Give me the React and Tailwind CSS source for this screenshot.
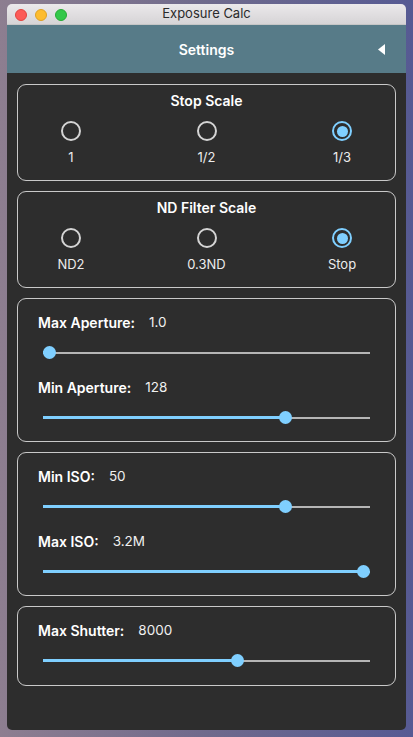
const font = { fontFamily: "Inter, 'Liberation Sans', sans-serif" }

function Radio({ label, checked }) {
	return (
		<div className="flex w-[40px] flex-col items-center">
			<div
				className={
					checked
						? "flex h-[20px] w-[20px] items-center justify-center rounded-full border-2 border-[#7fcfff]"
						: "h-[20px] w-[20px] rounded-full border-2 border-[#d4d4d4]"
				}
			>
				{checked && <div className="h-[11px] w-[11px] rounded-full bg-[#7fcfff]"></div>}
			</div>
			<div className="mt-[8px] whitespace-nowrap text-[13px] leading-[16px] text-[#ececec]">{label}</div>
		</div>
	)
}

function RadioCard({ title, options, selected }) {
	return (
		<div className="h-[97px] rounded-[9px] border-[1.5px] border-[#c9c9c9] pt-[7px]">
			<div className="text-center text-[14px] font-semibold leading-[17px] text-white">{title}</div>
			<div className="mt-[12px] flex justify-between px-[33px]">
				{options.map((o, i) => (
					<Radio key={o} label={o} checked={i === selected} />
				))}
			</div>
		</div>
	)
}

function Slider({ value }) {
	return (
		<div className="relative mx-[25px] h-[14px]">
			<div className="absolute left-0 right-0 top-[6px] h-[2px] bg-[#b5b5b5]"></div>
			<div
				className="absolute left-0 top-[5px] h-[3px] bg-[#7fcfff]"
				style={{ width: `calc(6px + (100% - 12px) * ${value / 100})` }}
			></div>
			<div
				className="absolute top-0 h-[13px] w-[13px] rounded-full bg-[#7fcfff]"
				style={{ left: `calc((100% - 13px) * ${value / 100})` }}
			></div>
		</div>
	)
}

function SliderRow({ label, value, pos }) {
	return (
		<div>
			<div className="flex h-[17px] items-center pl-[20px] text-[14px]">
				<span className="font-semibold text-white">{label}</span>
				<span className="ml-[14px] text-[13.5px] text-[#f0f0f0]">{value}</span>
			</div>
			<div className="mt-[15px]">
				<Slider value={pos} />
			</div>
		</div>
	)
}

function SliderCard({ rows, last }) {
	return (
		<div
			className={
				last
					? "flex flex-col gap-[19px] rounded-[9px] border-[1.5px] border-[#c9c9c9] pb-[17px] pt-[15px]"
					: "flex flex-col gap-[19px] rounded-[9px] border-[1.5px] border-[#c9c9c9] pb-[16px] pt-[15px]"
			}
		>
			{rows.map((r) => (
				<SliderRow key={r.label} {...r} />
			))}
		</div>
	)
}

export default function App() {
	return (
		<div
			className="h-[737px] w-[413px] bg-gradient-to-r from-[#8d7e90] via-[#6f6a8c] to-[#565a93] px-[7px] pb-[7px] pt-[4px]"
			style={font}
		>
			<div className="flex h-full flex-col overflow-hidden rounded-[5px]">
				<div className="relative flex h-[21px] items-center justify-center border-b border-[#c6c6c6] bg-gradient-to-b from-[#ebe9eb] to-[#d6d4d6]">
					<div className="absolute left-[8px] top-[5px] flex gap-[8px]">
						<div className="h-[12px] w-[12px] rounded-full border border-[#e0443e] bg-[#fc5b57]"></div>
						<div className="h-[12px] w-[12px] rounded-full border border-[#dea123] bg-[#fdbc2e]"></div>
						<div className="h-[12px] w-[12px] rounded-full border border-[#27aa35] bg-[#34c84a]"></div>
					</div>
					<span className="text-[13px] text-[#2b2b2b]">Exposure Calc</span>
				</div>
				<div className="relative flex h-[48px] items-center justify-center bg-[#577b88]">
					<span className="text-[14px] font-semibold text-white">Settings</span>
					<svg className="absolute right-[20px] top-[19px]" width="8" height="11" viewBox="0 0 8 11">
						<path d="M7 0 L7 11 L0 5.5 Z" fill="#fff" />
					</svg>
				</div>
				<div className="flex flex-1 flex-col gap-[10px] bg-[#2d2d2d] px-[10px] pt-[11px]">
					<RadioCard title="Stop Scale" options={["1", "1/2", "1/3"]} selected={2} />
					<RadioCard title="ND Filter Scale" options={["ND2", "0.3ND", "Stop"]} selected={2} />
					<SliderCard
						rows={[
							{ label: "Max Aperture:", value: "1.0", pos: 0 },
							{ label: "Min Aperture:", value: "128", pos: 75 },
						]}
					/>
					<SliderCard
						rows={[
							{ label: "Min ISO:", value: "50", pos: 75 },
							{ label: "Max ISO:", value: "3.2M", pos: 100 },
						]}
					/>
					<SliderCard last rows={[{ label: "Max Shutter:", value: "8000", pos: 60 }]} />
				</div>
			</div>
		</div>
	)
}
